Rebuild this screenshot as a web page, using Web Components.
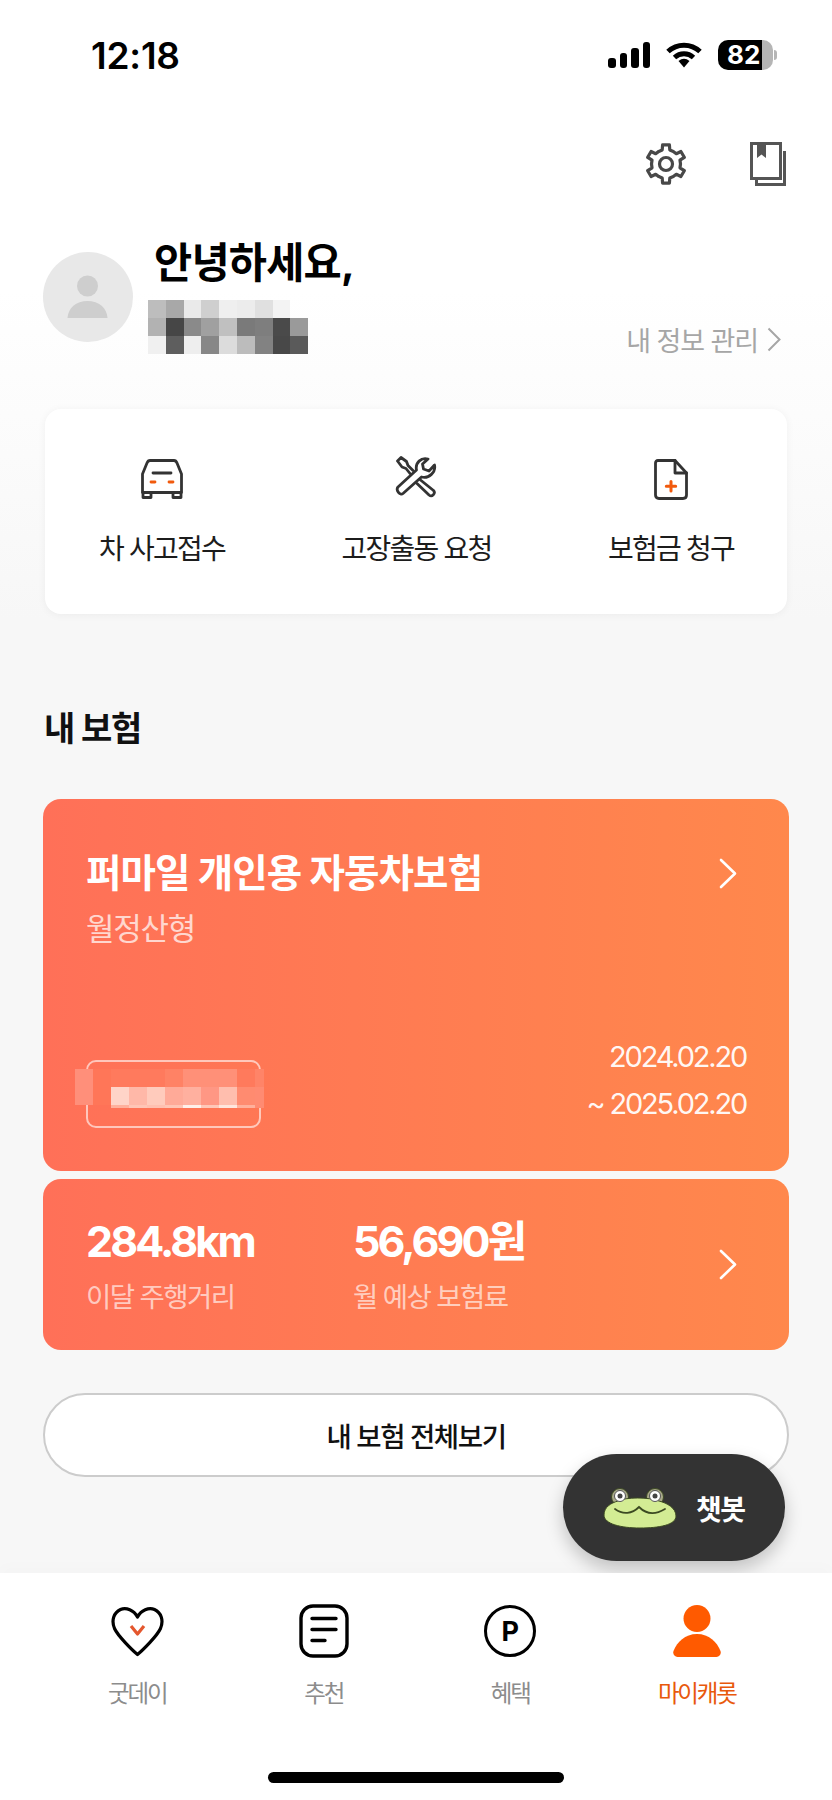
<!DOCTYPE html>
<html lang="ko">
<head>
<meta charset="utf-8">
<title>마이캐롯</title>
<style>
  html, body { margin: 0; padding: 0; }
  body {
    width: 832px;
    height: 1800px;
    overflow: hidden;
    position: relative;
    display: flex;
    flex-direction: column;
    background: linear-gradient(#fff 0, #fff 290px, #f7f7f7 620px);
    font-family: Inter, "Noto Sans CJK KR", sans-serif;
    color: #111;
  }
  tab-bar { margin-top: auto; }
  svg { display: block; }
</style>
</head>
<body>
  <status-bar time="12:18" battery="82"></status-bar>
  <top-tools></top-tools>
  <profile-greeting>안녕하세요,</profile-greeting>

  <quick-actions>
    <quick-action>
      <svg slot="icon" width="42" height="40" viewBox="0 0 42 40" fill="none" stroke="#333" stroke-width="2.800" stroke-linejoin="round" stroke-linecap="round">
        <path d="M9 1.500H33Q35 1.500 36 4L40.500 15V33.500H1.500V15L6 4Q7 1.500 9 1.500Z"/>
        <path d="M2 33.500V38.500H10V33.500M32 33.500V38.500H40V33.500"/>
        <path d="M12 14H30"/>
        <path d="M10 23H14M28 23H32" stroke="#f15a0d"/>
      </svg>
      차 사고접수
    </quick-action>
    <quick-action>
      <svg slot="icon" style="margin-top:-4px" width="43" height="42" viewBox="0 0 43 42" fill="none" stroke="#333" stroke-width="2.800" stroke-linejoin="round" stroke-linecap="round">
        <path d="M33 3C26 1 20 7 21.500 14L3 31C0.500 34 5 40 8 37.500L26.500 21C34 23 41 16 39.500 9L34 15L28.500 13L27.500 8Z"/>
        <path d="M15 17.500L11 12.500L7 11L2.500 5L6 1.500L11.500 5.500L13 9.500L18 14.500"/>
        <path d="M25.500 24L38.500 34.500C41 37.500 37 41.500 34 39L22 27.500"/>
      </svg>
      고장출동 요청
    </quick-action>
    <quick-action>
      <svg slot="icon" width="34" height="41" viewBox="0 0 34 41" fill="none" stroke="#333" stroke-width="2.800" stroke-linejoin="round" stroke-linecap="round">
        <path d="M4 1.500H21L32.500 14V36Q32.500 39.500 29 39.500H5Q1.500 39.500 1.500 36V4Q1.500 1.500 4 1.500Z"/>
        <path d="M21 1.500V14H32.500"/>
        <path d="M17 22.500V32M12.300 27.200H21.700" stroke="#f15a0d" stroke-width="3"/>
      </svg>
      보험금 청구
    </quick-action>
  </quick-actions>

  <section-heading>내 보험</section-heading>

  <policy-card start="2024.02.20" end="~ 2025.02.20">
    <span slot="title">퍼마일 개인용 자동차보험</span>
    <span slot="plan">월정산형</span>
  </policy-card>

  <mileage-card>
    <mileage-stat value="284.8km" label="이달 주행거리"></mileage-stat>
    <mileage-stat value="56,690원" label="월 예상 보험료"></mileage-stat>
  </mileage-card>

  <outline-button>내 보험 전체보기</outline-button>

  <chat-fab>챗봇</chat-fab>

  <tab-bar>
    <tab-item>
      <svg slot="icon" width="53" height="52" viewBox="0 0 53 52" fill="none" stroke="#000" stroke-width="3.200" stroke-linejoin="round" stroke-linecap="round">
        <path d="M26.500 12C23 5 15 2 9.500 4.500C3 7.500 0 15 3.500 23.500C7 31 21 45 26.500 49.500C32 45 46 31 49.500 23.500C53 15 50 7.500 43.500 4.500C38 2 30 5 26.500 12Z"/>
        <path d="M20 21L26.500 29L33 21" stroke="#e4572e" stroke-linecap="butt"/>
      </svg>
      굿데이
    </tab-item>
    <tab-item>
      <svg slot="icon" width="50" height="54" viewBox="0 0 50 54" fill="none" stroke="#000" stroke-width="3.400" stroke-linecap="round">
        <rect x="2" y="2" width="46" height="50" rx="12"/>
        <path d="M13 14.500H37M13 25.500H37M13 36.500H26"/>
      </svg>
      추천
    </tab-item>
    <tab-item>
      <p-badge slot="icon">P</p-badge>
      혜택
    </tab-item>
    <tab-item active>
      <svg slot="icon" width="48" height="52" viewBox="0 0 48 52" fill="#ff5a00">
        <circle cx="24" cy="13.500" r="13.500"/>
        <path d="M24 29C36 29 44 37 47.500 46C48.500 49 46.500 52 43.500 52H4.500C1.500 52 -0.500 49 0.500 46C4 37 12 29 24 29Z"/>
      </svg>
      마이캐롯
    </tab-item>
  </tab-bar>

<script>
function define(name, css, html, setup) {
  customElements.define(name, class extends HTMLElement {
    constructor() {
      super();
      this.attachShadow({ mode: "open" });
    }
    connectedCallback() {
      const markup = typeof html === "function" ? html(this) : html;
      this.shadowRoot.innerHTML = `<style>${css}</style>${markup}`;
      if (setup) setup(this);
    }
  });
}

function gearPath(cx, cy, outer, inner) {
  const pts = [];
  for (let i = 0; i < 6; i++) {
    const a = -90 + i * 60;
    [[-30, inner], [-15, inner], [-10, outer], [10, outer], [15, inner]].forEach(([d, r]) => {
      const t = ((a + d) * Math.PI) / 180;
      pts.push(`${(cx + r * Math.cos(t)).toFixed(1)} ${(cy + r * Math.sin(t)).toFixed(1)}`);
    });
  }
  return `M${pts.join("L")}Z`;
}

const chevron = `<svg width="18" height="31" viewBox="0 0 18 31" fill="none" stroke="#fff" stroke-width="2.600" stroke-linecap="round" stroke-linejoin="round"><path d="M2 2L16 15.500L2 29"/></svg>`;

define("status-bar", `
  :host { display: flex; align-items: center; justify-content: space-between; height: 110px; padding: 0 55px 0 91px; box-sizing: border-box; }
  .time { font: 600 37px/1 Inter, sans-serif; letter-spacing: -.2px; color: #000; }
  .icons { display: flex; align-items: center; gap: 16px; }
  .signal { display: flex; align-items: flex-end; gap: 4px; height: 26px; }
  .signal i { width: 7.500px; background: #000; border-radius: 3px; }
  .battery { display: flex; align-items: center; }
  .cell { flex: none; width: 55px; height: 30px; border-radius: 10px; background: linear-gradient(90deg, #000 0 44px, #b5b5b5 44px); color: #fff; font: 700 26px/30px Inter, sans-serif; padding-left: 9px; box-sizing: border-box; white-space: nowrap; }
  .nub { width: 3px; height: 10px; margin-left: 1px; background: #b5b5b5; border-radius: 0 3px 3px 0; }
`, (el) => `
  <div class="time">${el.getAttribute("time")}</div>
  <div class="icons">
    <div class="signal"><i style="height:10px"></i><i style="height:15px"></i><i style="height:20px"></i><i style="height:26px"></i></div>
    <svg width="36" height="26" viewBox="0 0 36 26" fill="none" stroke="#000" stroke-width="5">
      <path d="M2 9.500C11 1 25 1 34 9.500"/>
      <path d="M8.500 15.500C14 10.500 22 10.500 27.500 15.500"/>
      <path d="M12.500 19Q18 14.500 23.500 19L18 25.500Z" fill="#000" stroke="none"/>
    </svg>
    <div class="battery"><div class="cell">${el.getAttribute("battery")}</div><div class="nub"></div></div>
  </div>
`);

define("top-tools", `
  :host { display: flex; justify-content: flex-end; align-items: center; gap: 64px; height: 44px; margin-top: 32px; padding-right: 46px; }
`, () => `
  <svg width="40" height="42" viewBox="0 0 40 42" fill="none" stroke="#484848" stroke-width="3.200" stroke-linejoin="round">
    <path d="${gearPath(20, 21, 19.5, 14.5)}"/>
    <circle cx="20" cy="21" r="6.500"/>
  </svg>
  <svg width="36" height="44" viewBox="0 0 36 44" fill="none" stroke="#555" stroke-width="3">
    <rect x="1.500" y="1.500" width="29" height="35"/>
    <path d="M34.500 9V42.500H6.500V37"/>
    <path d="M7 1.500H16V16L11.500 12.500L7 16Z" fill="#555" stroke="none"/>
  </svg>
`);

define("pixel-mosaic", `
  :host { display: grid; grid-auto-columns: 17.800px; }
  i { display: block; }
`, () => "", (el) => {
  const rows = el.getAttribute("cells").trim().split("|");
  const heights = (el.getAttribute("heights") || "").split(" ");
  el.style.gridTemplateRows = rows.map((_, r) => heights[r] || "18px").join(" ");
  if (el.hasAttribute("columns")) el.style.gridTemplateColumns = el.getAttribute("columns");
  rows.forEach((row, r) => {
    row.trim().split(/\s+/).forEach((color, c) => {
      const cell = document.createElement("i");
      cell.style.cssText = `background:${color};grid-row:${r + 1};grid-column:${c + 1}`;
      el.shadowRoot.appendChild(cell);
    });
  });
});

define("profile-greeting", `
  :host { display: flex; height: 112px; margin-top: 57px; padding: 0 51px 0 43px; position: relative; }
  .avatar { width: 90px; height: 90px; margin-top: 9px; border-radius: 50%; background: #e8e8e8; flex: none; }
  .who { margin-left: 15px; flex: none; }
  .hello { height: 57px; padding-left: 6px; font-size: 41.500px; line-height: 41px; font-weight: 700; letter-spacing: -.8px; color: #000; white-space: nowrap; }
  .manage { margin-left: auto; align-self: flex-end; display: flex; align-items: center; gap: 9px; height: 28px; margin-bottom: 2px; font-size: 27px; letter-spacing: -1.100px; color: #a6a6a6; }
`, () => `
  <div class="avatar">
    <svg width="90" height="90" viewBox="0 0 90 90" fill="#cecece">
      <circle cx="44.500" cy="34" r="10.500"/>
      <path d="M24.500 66C25 56 33 49 44.500 49C56 49 64 56 64.500 66Z"/>
    </svg>
  </div>
  <div class="who">
    <div class="hello"><slot></slot></div>
    <pixel-mosaic cells="
      #bdbdbd #a8a8a8 #eaeaea #cfcfcf #efefef #ececec #e0e0e0 #f3f3f3 transparent |
      #b2b2b2 #464646 #8a8a8a #a0a0a0 #c0c0c0 #7a7a7a #7e7e7e #4a4a4a #9a9a9a |
      #f0f0f0 #5e5e5e #eeeeee #878787 #dcdcdc #bcbcbc #828282 #484848 #5a5a5a"></pixel-mosaic>
  </div>
  <div class="manage">내 정보 관리
    <svg width="14" height="25" viewBox="0 0 14 25" fill="none" stroke="#a6a6a6" stroke-width="2"><path d="M1.500 1.500L12.500 12.500L1.500 23.500"/></svg>
  </div>
`);

define("quick-actions", `
  :host { display: grid; grid-template-columns: repeat(3, 200px); column-gap: 54.500px; align-items: start; box-sizing: border-box; width: 742px; height: 205px; margin: 54px 0 0 45px; padding: 49px 0 0 17px; background: #fff; border-radius: 16px; box-shadow: 0 1px 8px rgba(0,0,0,.05); }
`, `<slot></slot>`);

define("quick-action", `
  :host { display: flex; flex-direction: column; align-items: center; font-size: 28px; line-height: 34px; letter-spacing: -1.800px; color: #1c1c1c; white-space: nowrap; }
  .icon { height: 42px; margin-bottom: 32px; display: flex; align-items: center; }
`, `<div class="icon"><slot name="icon"></slot></div><slot></slot>`);

define("section-heading", `
  :host { display: block; margin: 92px 0 0 44px; height: 46px; font-size: 34px; line-height: 46px; font-weight: 700; letter-spacing: -1.200px; color: #111; }
`, `<slot></slot>`);

const orangeCard = `
  box-sizing: border-box; width: 746px; margin-left: 43px; border-radius: 18px; color: #fff;
  background: linear-gradient(90deg, #ff7058, #ff884c); position: relative;
`;

define("policy-card", `
  :host { display: block; height: 372px; margin-top: 47px; padding: 51px 43px 0; ${orangeCard} }
  .title { font-size: 38.500px; line-height: 46px; font-weight: 700; letter-spacing: -.9px; white-space: nowrap; }
  .plan { margin-top: 15px; font-size: 31px; line-height: 36px; letter-spacing: -1.300px; color: rgba(255,255,255,.72); }
  .chev { position: absolute; right: 52px; top: 59px; }
  .bottom { position: absolute; left: 43px; right: 43px; top: 234px; display: flex; justify-content: space-between; align-items: flex-start; }
  .plate { position: relative; box-sizing: border-box; width: 175px; height: 68px; margin-top: 27px; border: 2px solid rgba(255,255,255,.6); border-radius: 10px; }
  pixel-mosaic { position: absolute; left: -13px; top: 7px; }
  .dates { text-align: right; font-size: 29px; line-height: 47px; letter-spacing: -2.200px; white-space: nowrap; color: rgba(255,255,255,.95); }
`, (el) => `
  <div class="title"><slot name="title"></slot></div>
  <div class="plan"><slot name="plan"></slot></div>
  <div class="chev">${chevron}</div>
  <div class="bottom">
    <div class="plate">
      <pixel-mosaic columns="repeat(10, 18px) 9px" heights="18px 18px 3px" cells="
        #ff8f7a #ff7658 #ff7a5d #ff7a5d #ff7a5d #ff8265 #ff9078 #ff9078 #ff9078 #ff7a5c #ff8468 |
        #ff8f7a #ff7658 #ffd4c8 #ffb8a8 #ffcbbc #ffaa98 #ffb09f #ff9784 #ffbeae #ff8b70 #ff8b72 |
        transparent transparent #ffb09c #ffc5b6 #ffc0b0 #ffc5b5 #ffefe9 #ffc7b8 #ffe5dc #ffb09c #ff8b72"></pixel-mosaic>
    </div>
    <div class="dates">${el.getAttribute("start")}<br>${el.getAttribute("end")}</div>
  </div>
`);

define("mileage-card", `
  :host { display: flex; gap: 0; height: 171px; margin-top: 8px; padding: 36px 43px 0; ${orangeCard} }
  .chev { position: absolute; right: 52px; top: 70px; }
`, () => `<slot></slot><div class="chev">${chevron}</div>`);

define("mileage-stat", `
  :host { display: block; width: 267px; white-space: nowrap; }
  .value { font-size: 43px; line-height: 52px; font-weight: 700; letter-spacing: -2.900px; }
  .label { margin-top: 13px; font-size: 27.500px; line-height: 34px; letter-spacing: -1.600px; color: rgba(255,255,255,.65); }
`, (el) => `<div class="value">${el.getAttribute("value")}</div><div class="label">${el.getAttribute("label")}</div>`);

define("outline-button", `
  :host { display: flex; align-items: center; justify-content: center; box-sizing: border-box; width: 746px; height: 84px; margin: 43px 0 0 43px; background: #fff; border: 2px solid #ccc; border-radius: 42px; font-size: 27.500px; font-weight: 500; letter-spacing: -1.400px; color: #111; }
`, `<slot></slot>`);

define("chat-fab", `
  :host { position: absolute; left: 563px; top: 1454px; box-sizing: border-box; width: 222px; height: 107px; display: flex; align-items: center; padding-left: 40px; gap: 19px; border-radius: 54px; background: #333; color: #fff; font-size: 28px; font-weight: 700; letter-spacing: -1.500px; box-shadow: 0 8px 18px rgba(0,0,0,.22); }
`, `
  <svg width="74" height="42" viewBox="0 0 74 42" stroke="#3c4a22">
    <circle cx="17" cy="10" r="8.500" fill="#a9a98a" stroke-width="1"/>
    <circle cx="52" cy="10" r="8.500" fill="#a9a98a" stroke-width="1"/>
    <path d="M1 28C1 20 8 16 15 14C22 10 47 10 56 14C64 16 73 21 73 29C73 38 56 41 37 41C18 41 1 37 1 28Z" fill="#d3ec94" stroke-width="1"/>
    <circle cx="17" cy="9" r="5.500" fill="#fff" stroke="#555" stroke-width="1"/>
    <circle cx="52" cy="9" r="5.500" fill="#fff" stroke="#555" stroke-width="1"/>
    <circle cx="17" cy="9" r="2.500" fill="#444" stroke="none"/>
    <circle cx="52" cy="9" r="2.500" fill="#444" stroke="none"/>
    <path d="M12 22C20 28 29 27 36 20C43 27 52 28 62 22" fill="none" stroke-width="1.800" stroke-linecap="round"/>
  </svg>
  <slot></slot>
`);

define("tab-bar", `
  :host { display: block; position: relative; height: 227px; background: #fff; box-shadow: 0 -8px 12px rgba(0,0,0,.012); }
  .tabs { display: grid; grid-template-columns: repeat(4, 186.500px); padding: 31px 0 0 44px; }
  .home { position: absolute; left: 268px; top: 199px; width: 296px; height: 11px; border-radius: 6px; background: #000; }
`, `<div class="tabs"><slot></slot></div><div class="home"></div>`);

define("tab-item", `
  :host { display: flex; flex-direction: column; align-items: center; font-size: 23.500px; line-height: 30px; letter-spacing: -2.200px; color: #8c8c8c; white-space: nowrap; }
  :host([active]) { color: #e8590c; }
  .icon { height: 54px; margin-bottom: 21px; display: flex; align-items: center; }
`, `<div class="icon"><slot name="icon"></slot></div><slot></slot>`);

define("p-badge", `
  :host { box-sizing: border-box; display: flex; align-items: center; justify-content: center; width: 52px; height: 52px; border: 3.400px solid #000; border-radius: 50%; font: 700 27px/1 Inter, sans-serif; letter-spacing: 0; color: #000; }
`, `<slot></slot>`);
</script>
</body>
</html>
